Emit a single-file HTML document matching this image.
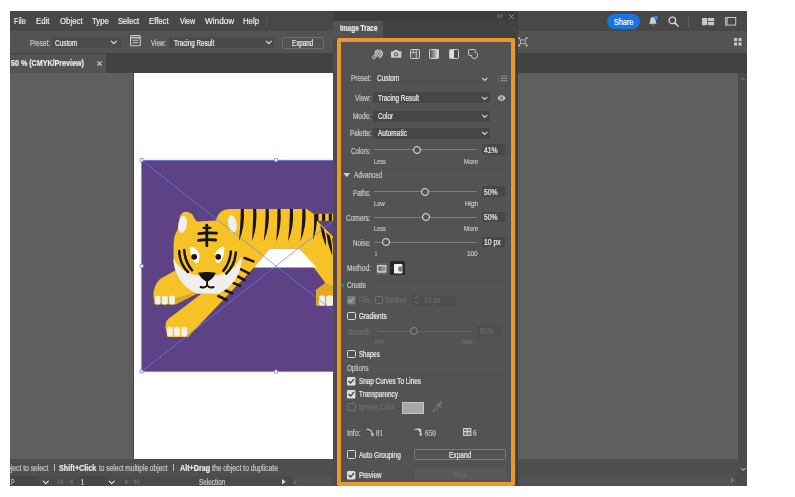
<!DOCTYPE html>
<html>
<head>
<meta charset="utf-8">
<style>
*{box-sizing:border-box;margin:0;padding:0}
html,body{width:795px;height:497px;overflow:hidden;background:#fff;font-family:"Liberation Sans",sans-serif;}
#app{position:absolute;left:10px;top:11px;width:737px;height:475px;background:#5e5e5e;overflow:hidden;}
#in{position:absolute;left:-10px;top:-11px;width:795px;height:497px;filter:blur(0.45px);will-change:transform;transform:translateZ(0)}
.a{position:absolute}
.t{position:absolute;white-space:pre;transform-origin:0 50%;-webkit-text-stroke:0.22px currentColor;}
svg{position:absolute;overflow:visible}
.dd{position:absolute;background:#474747;border-radius:1.5px}
.cb{position:absolute;width:8px;height:8px;border:1px solid #d6d6d6;border-radius:1px}
.cbd{position:absolute;width:8px;height:8px;border:1px solid #777;border-radius:1px}
.sl{position:absolute;height:1px;background:#808080}
.kn{position:absolute;width:8px;height:8px;border:1.4px solid #ececec;border-radius:50%;background:#535353}

</style>
</head>
<body>
<div id="app"><div id="in">
<!-- top bars -->
<div class="a" style="left:10px;top:11px;width:737px;height:20px;background:#484848"></div>
<div class="a" style="left:10px;top:31px;width:737px;height:22px;background:#535353"></div>
<div class="a" style="left:10px;top:53px;width:737px;height:19.5px;background:#424242"></div>
<div class="a" style="left:10px;top:53.8px;width:96px;height:18.9px;background:#535353"></div>
<!-- canvas -->
<div class="a" style="left:10px;top:72.5px;width:737px;height:386px;background:#5f5f5f"></div>
<div class="a" style="left:133.5px;top:72.5px;width:210px;height:386px;background:#fff"></div>
<!-- status + bottom -->
<div class="a" style="left:10px;top:458.5px;width:737px;height:17px;background:#4f4f4f"></div>
<div class="a" style="left:10px;top:475.5px;width:737px;height:11px;background:#4b4b4b"></div>
<!-- right scrollbar -->
<div class="a" style="left:738px;top:72.5px;width:9px;height:414px;background:#4b4b4b"></div>
<svg style="left:0;top:0" width="795" height="497" viewBox="0 0 795 497">
<defs><clipPath id="cp"><rect x="141.6" y="160.2" width="200" height="211.4"/></clipPath></defs>
<rect x="133" y="72.5" width="0.8" height="386" fill="#3c3c3c"/>
<rect x="141.6" y="160.2" width="200" height="211.4" fill="#5d4286"/>
<g clip-path="url(#cp)">
 <!-- body -->
 <path d="M215 224 Q217 210 229 209 L306.6 209 L313.6 213.8 L337 213.8 L337 220.8 L317 220.8 L337 240.6 L337 306 L316.2 305.6 L315.9 290 L325.4 283 L299.6 248.7 L269.7 248.7 L254 267.6 L189.8 335 L188.3 337 L167.4 337 L165.4 327 Q165.6 319.4 171.6 316.6 L201 294 Z" fill="#f6c226"/>
 <!-- rear paw darker -->
 <path d="M316 290 L325.4 283 L337 287 L337 306 L316.2 305.6Z" fill="#e2a828"/>
 <!-- belly white -->
 <path d="M269.7 248.7 L299.3 248.7 L316.5 267.5 L254 267.5Z" fill="#ffffff"/>
 <!-- left leg -->
 <path d="M176 270 L160 279 Q153 286 153.4 297 L154.6 304.3 L176 304.3 L200 292 Z" fill="#f6c226"/>
 <path d="M154 296.5 L176 298 L198 291.5 L176 304.3 L154.6 304.3Z" fill="#dca421"/>
 <!-- toes -->
 <g fill="#f4f0ea">
  <rect x="155" y="295.8" width="5.6" height="8.6" rx="2"/><rect x="161.8" y="295.8" width="6" height="8.6" rx="2"/><rect x="169" y="295.8" width="6" height="8.6" rx="2"/>
  <rect x="167.2" y="326.8" width="5.6" height="9.6" rx="2"/><rect x="174.1" y="326.8" width="5.8" height="9.8" rx="2"/><rect x="181.3" y="326.8" width="5.8" height="9.8" rx="2"/>
  <rect x="319" y="295.6" width="6" height="10" rx="2"/><rect x="326.2" y="295.6" width="7" height="10.2" rx="2"/>
 </g>
 <!-- body stripes -->
 <g fill="#1a1712">
  <path d="M240.8 209 L243.8 209 Q245.2 227 238.8 241.4 Q240.6 227 240.8 209Z"/>
  <path d="M253.2 209 L256.2 209 Q257.6 227 252.0 241.4 Q253.0 227 253.2 209Z"/>
  <path d="M265.7 209 L268.7 209 Q270.1 227 263.7 241.4 Q265.5 227 265.7 209Z"/>
  <path d="M277.5 209 L280.5 209 Q281.9 227 276.2 241.4 Q277.3 227 277.5 209Z"/>
  <path d="M289.9 209 L292.9 209 Q294.3 227 288.0 241.4 Q289.7 227 289.9 209Z"/>
  <path d="M302.4 209 L305.4 209 Q306.8 227 300.4 241.4 Q302.2 227 302.4 209Z"/>
  <path d="M314.2 214 L317 214 Q317.4 228 312.9 240.6 Q314.4 228 314.2 214Z"/>
  <rect x="315.8" y="213.8" width="2.6" height="7"/><rect x="322" y="213.8" width="3.2" height="7"/><rect x="328.8" y="213.8" width="3" height="7"/>
  <path d="M320.2 225.6 L323.6 228.8 Q326.6 238 325.8 246 Q321.6 236 320.2 225.6Z"/>
  <path d="M326.2 232.4 L329.6 235.6 Q332.8 246 332 255.6 Q327.6 244 326.2 232.4Z"/>
  <path d="M332.2 238 L335.4 241.4 Q337.6 252 336.4 263 Q333 250 332.2 238Z"/>
 </g>
 <g fill="none" stroke="#1a1712" stroke-width="2.6" stroke-linecap="round">
  <path d="M244.6 258 L253.4 261.4"/>
  <path d="M240.6 269.2 L249 273.4"/>
  <path d="M237 276 L244.6 280.2"/>
  <path d="M232.6 282.6 L240 285.8"/>
  <path d="M225 290.2 L232.4 293.5"/>
  <path d="M218.4 296 L226.6 300"/>
 </g>
 <!-- head -->
 <path d="M177.4 230 L180 216 Q183 210.4 188 212 L192 214 L196.5 221.4 L227 220 L240 243 L241.5 262 Q239 283 219 293.6 L197 293.6 Q177 285 173.6 262 L173.6 243 Q174 235 177.4 230Z" fill="#f6c226"/>
 <!-- white crescent -->
 <path d="M173.6 258.5 C178 268 186 273.4 197.5 275.6 L216.8 275.6 C228 273.4 236 268 241.3 257 L241.5 262 Q239 283 219 293.6 L197 293.6 Q177 285 173.6 262Z" fill="#f1efee"/>
 <!-- ears inner -->
 <ellipse cx="182.6" cy="224.4" rx="4.2" ry="8.8" fill="#f1efee" transform="rotate(10 182.6 224.4)"/>
 <ellipse cx="232.4" cy="224" rx="4.2" ry="8.8" fill="#f1efee" transform="rotate(-10 232.4 224)"/>
 <!-- eyes -->
 <path d="M190 246.6 Q197.2 248 199.5 255 Q199.8 261.8 196.4 263.6 Q189.8 259 190 246.6Z" fill="#ffffff"/>
 <path d="M224.4 246.6 Q217.2 248 214.9 255 Q214.6 261.8 218 263.6 Q224.6 259 224.4 246.6Z" fill="#ffffff"/>
 <circle cx="194.2" cy="256.8" r="2.9" fill="#17140f"/>
 <circle cx="218.2" cy="256.8" r="2.9" fill="#17140f"/>
 <!-- nose -->
 <path d="M198.2 272.8 Q207 271 215.8 272.8 Q213 279.4 207.1 282 Q201 279.4 198.2 272.8Z" fill="#17140f"/>
 <path d="M207.1 281 V285.2 M200.6 287 Q204.8 288.6 207.1 285.2 Q209.4 288.6 213.6 287" fill="none" stroke="#17140f" stroke-width="1.9" stroke-linecap="round"/>
 <!-- forehead stripes -->
 <g fill="none" stroke="#17140f" stroke-width="2.8" stroke-linecap="round">
  <path d="M206.8 225.2 V245.8"/>
  <path d="M198.8 233.6 Q207 232.2 216.4 233.2"/>
  <path d="M198.6 240.4 Q207 239 215.6 240"/>
  <path d="M203.6 227.8 H210.4" stroke-width="2.2"/>
 </g>
 <g fill="none" stroke="#17140f" stroke-width="2.5" stroke-linecap="round">
  <path d="M179.2 251 Q179.6 264 188 272"/>
  <path d="M184.2 250 Q185 262 192 270.2"/>
  <path d="M235.8 252.6 Q235 265 226.2 273.6"/>
  <path d="M230.8 251.6 Q230 262.6 223.4 270.8"/>
 </g>
</g>
<!-- selection -->
<g stroke="#5b86f5" stroke-width="0.7" fill="none">
 <rect x="141.6" y="160.2" width="268.8" height="211.4"/>
 <path d="M141.6 160.2 L410.4 371.6 M141.6 371.6 L410.4 160.2"/>
</g>
<g fill="#ffffff" stroke="#5b86f5" stroke-width="0.7">
 <rect x="140.1" y="158.7" width="3" height="3"/><rect x="274.5" y="158.7" width="3" height="3"/>
 <rect x="140.1" y="264.4" width="3" height="3"/>
 <rect x="140.1" y="370.1" width="3" height="3"/><rect x="274.5" y="370.1" width="3" height="3"/>
</g>
</svg>

<div class="a" style="left:266.3px;top:16px;width:0.8px;height:12.2px;background:#545454;"></div>
<div class="a" style="left:51.5px;top:36.6px;width:70.5px;height:11.8px;background:#4c4c4c;border-radius:1.5px"></div>
<div class="a" style="left:168.8px;top:36.6px;width:105.0px;height:11.8px;background:#4a4a4a;border-radius:1.5px"></div>
<svg style="left:110.5px;top:41.1px" width="5.6" height="2.9" viewBox="0 0 5.6 2.9"><path d="M0.3 0.2 L2.8 2.6 L5.3 0.2" fill="none" stroke="#e6e6e6" stroke-width="1.1" stroke-linecap="round" stroke-linejoin="round"/></svg>
<svg style="left:265.5px;top:41.1px" width="5.6" height="2.9" viewBox="0 0 5.6 2.9"><path d="M0.3 0.2 L2.8 2.6 L5.3 0.2" fill="none" stroke="#e6e6e6" stroke-width="1.1" stroke-linecap="round" stroke-linejoin="round"/></svg>
<svg style="left:129.6px;top:35.4px" width="10.8" height="11.4" viewBox="0 0 9.6 10"><rect x="0.5" y="0.5" width="8.6" height="9" rx="1" fill="none" stroke="#c9c9c9" stroke-width="1"/><path d="M0.5 2.4H9.1" stroke="#c9c9c9" stroke-width="1.2"/><path d="M2.2 4.6H7.4M2.2 6.8H7.4" stroke="#c9c9c9" stroke-width="0.9"/></svg>
<div class="a" style="left:281.7px;top:36.6px;width:41.9px;height:12.2px;background:transparent;border:1px solid #6e6e6e;border-radius:1.5px"></div>
<svg style="left:96.7px;top:60.9px" width="5" height="5" viewBox="0 0 4.8 4.8"><path d="M0.4 0.4L4.4 4.4M4.4 0.4L0.4 4.4" stroke="#d2d2d2" stroke-width="1.05"/></svg>
<div class="a" style="left:607.1px;top:13.5px;width:33.1px;height:15.2px;background:#1b74e4;border-radius:8px"></div>
<svg style="left:648.4px;top:15.8px" width="10.6" height="10.6" viewBox="0 0 10 10"><path d="M1 7.2C2 6.2 2 5 2.1 3.6C2.3 1.8 3.4 1 4.6 1S6.9 1.8 7.1 3.6C7.2 5 7.2 6.2 8.2 7.2Z" fill="#d3d3d3"/><path d="M3.6 8.2Q4.6 9.6 5.6 8.2Z" fill="#d3d3d3"/><circle cx="7.5" cy="1.7" r="1.9" fill="#3b8cf0"/></svg>
<svg style="left:668px;top:15.6px" width="11" height="11" viewBox="0 0 11 11"><circle cx="4.4" cy="4.4" r="3.3" fill="none" stroke="#d6d6d6" stroke-width="1.3"/><path d="M6.9 6.9L10.2 10.2" stroke="#d6d6d6" stroke-width="1.5" stroke-linecap="round"/></svg>
<div class="a" style="left:688.2px;top:16px;width:0.8px;height:11.0px;background:#5c5c5c;"></div>
<svg style="left:701.6px;top:17.9px" width="12.2" height="7.2" viewBox="0 0 12.2 7.2"><rect x="0" y="0" width="5.2" height="7.2" fill="#c8c8c8"/><rect x="6" y="0" width="6.2" height="3.2" fill="#c8c8c8"/><rect x="6" y="4" width="6.2" height="3.2" fill="#c8c8c8"/></svg>
<svg style="left:725.3px;top:17.3px" width="11.2" height="8.6" viewBox="0 0 11.2 8.6"><rect x="0.5" y="0.5" width="10.2" height="7.6" fill="none" stroke="#c8c8c8" stroke-width="1"/><rect x="0.5" y="0.5" width="2.4" height="7.6" fill="#9a9a9a"/></svg>
<svg style="left:517.8px;top:37.3px" width="9.6" height="9.6" viewBox="0 0 9.6 9.6"><rect x="2.4" y="2.9" width="4.8" height="3.8" fill="none" stroke="#bdbdbd" stroke-width="0.9"/><path d="M0.4 0.6L2 2.2M9.2 0.6L7.6 2.2M0.4 9L2 7.4M9.2 9L7.6 7.4" stroke="#cfcfcf" stroke-width="1.1"/><path d="M0.2 0.4H1.8L0.2 2Z M9.4 0.4H7.8L9.4 2Z M0.2 9.2H1.8L0.2 7.6Z M9.4 9.2H7.8L9.4 7.6Z" fill="#cfcfcf"/></svg>
<svg style="left:734.4px;top:38.2px" width="7.6" height="7.6" viewBox="0 0 7.6 7.6"><rect x="0" y="0" width="3.1" height="3.1" fill="#c9c9c9"/><rect x="4.5" y="0" width="3.1" height="3.1" fill="#c9c9c9"/><rect x="0" y="4.5" width="3.1" height="3.1" fill="#c9c9c9"/><rect x="4.5" y="4.5" width="3.1" height="3.1" fill="#c9c9c9"/></svg>
<svg style="left:740.7px;top:78.2px" width="4.2" height="2.4" viewBox="0 0 4.2 2.4"><path d="M0.3 2.2L2.1 0.3L3.9 2.2" fill="none" stroke="#8d8d8d" stroke-width="1"/></svg>
<svg style="left:740.6px;top:468.1px" width="4.6" height="2.6" viewBox="0 0 4.6 2.6"><path d="M0.3 0.2 L2.3 2.3000000000000003 L4.3 0.2" fill="none" stroke="#a5a5a5" stroke-width="1.1" stroke-linecap="round" stroke-linejoin="round"/></svg>
<div class="a" style="left:517.5px;top:476.4px;width:218.5px;height:9.6px;background:#535353;border-radius:5px"></div>
<div class="a" style="left:292.5px;top:476.4px;width:40.5px;height:9.6px;background:#535353;border-radius:3px 0 0 3px"></div>
<svg style="left:730.8px;top:478.4px" width="2.6" height="4.4" viewBox="0 0 2.6 4.4"><path d="M0.3 0.3L2.2 2.2L0.3 4.1" fill="none" stroke="#a5a5a5" stroke-width="1"/></svg>
<div class="a" style="left:10px;top:476.2px;width:29.2px;height:9.8px;background:#454545;border-radius:1px"></div>
<div class="a" style="left:79.5px;top:476.2px;width:25.3px;height:9.8px;background:#454545;border-radius:1px"></div>
<svg style="left:42.5px;top:480.8px" width="5.6" height="2.9" viewBox="0 0 5.6 2.9"><path d="M0.3 0.2 L2.8 2.6 L5.3 0.2" fill="none" stroke="#e6e6e6" stroke-width="1.1" stroke-linecap="round" stroke-linejoin="round"/></svg>
<svg style="left:108.6px;top:480.8px" width="5.6" height="2.9" viewBox="0 0 5.6 2.9"><path d="M0.3 0.2 L2.8 2.6 L5.3 0.2" fill="none" stroke="#e6e6e6" stroke-width="1.1" stroke-linecap="round" stroke-linejoin="round"/></svg>
<svg style="left:57.6px;top:479.4px" width="5.4" height="5.4" viewBox="0 0 5.4 5.4"><path d="M0.6 0V5.4" stroke="#6b6b6b" stroke-width="1"/><path d="M5.2 0L1.6 2.7L5.2 5.4Z" fill="#6b6b6b"/></svg>
<svg style="left:68.8px;top:479.4px" width="4" height="5.4" viewBox="0 0 4 5.4"><path d="M3.8 0L0.2 2.7L3.8 5.4Z" fill="#6b6b6b"/></svg>
<svg style="left:124.6px;top:479.4px" width="4" height="5.4" viewBox="0 0 4 5.4"><path d="M0.2 0L3.8 2.7L0.2 5.4Z" fill="#6b6b6b"/></svg>
<svg style="left:134px;top:479.4px" width="5.4" height="5.4" viewBox="0 0 5.4 5.4"><path d="M4.8 0V5.4" stroke="#6b6b6b" stroke-width="1"/><path d="M0.2 0L3.8 2.7L0.2 5.4Z" fill="#6b6b6b"/></svg>
<svg style="left:282.2px;top:479.2px" width="3.8" height="5.6" viewBox="0 0 3.8 5.6"><path d="M0 0L3.8 2.8L0 5.6Z" fill="#d8d8d8"/></svg>
<svg style="left:294px;top:479.6px" width="2.6" height="4.4" viewBox="0 0 2.6 4.4"><path d="M2.2 0.3L0.4 2.2L2.2 4.1" fill="none" stroke="#8a8a8a" stroke-width="0.9"/></svg>
<div class="a" style="left:53.5px;top:464.4px;width:0.9px;height:6.2px;background:#bdbdbd;"></div>
<div class="a" style="left:173.2px;top:464.4px;width:0.9px;height:6.2px;background:#bdbdbd;"></div>
<!-- panel -->
<div class="a" style="left:332.6px;top:11px;width:185.3px;height:476px;background:#3d4040"></div>
<div class="a" style="left:332.6px;top:11px;width:183.6px;height:476px;background:#535353"></div>
<div class="a" style="left:332.6px;top:37.5px;width:4.6px;height:450px;background:#4c4c4c"></div>
<div class="a" style="left:332.6px;top:11px;width:185.3px;height:9.5px;background:#3e3e3e"></div>
<div class="a" style="left:332.6px;top:20.5px;width:185.3px;height:17px;background:#424242"></div>
<div class="a" style="left:333.2px;top:21px;width:49.4px;height:17px;background:#535353"></div>
<div class="a" style="left:337px;top:38.2px;width:177.6px;height:447.9px;border:4.1px solid #e8982f;border-radius:2px"></div>
<div class="a" style="left:373.3px;top:73px;width:117.0px;height:11.3px;background:#515151;border-radius:1.5px"></div>
<div class="a" style="left:373.3px;top:92.3px;width:117.0px;height:11.0px;background:#464646;border-radius:1.5px"></div>
<div class="a" style="left:373.3px;top:110.6px;width:117.0px;height:11.2px;background:#464646;border-radius:1.5px"></div>
<div class="a" style="left:373.3px;top:127.6px;width:117.0px;height:11.3px;background:#464646;border-radius:1.5px"></div>
<svg style="left:481.6px;top:77.6px" width="5.4" height="2.7" viewBox="0 0 5.4 2.7"><path d="M0.3 0.2 L2.7 2.4000000000000004 L5.1000000000000005 0.2" fill="none" stroke="#e2e2e2" stroke-width="1.05" stroke-linecap="round" stroke-linejoin="round"/></svg>
<svg style="left:481.6px;top:96.8px" width="5.4" height="2.7" viewBox="0 0 5.4 2.7"><path d="M0.3 0.2 L2.7 2.4000000000000004 L5.1000000000000005 0.2" fill="none" stroke="#e2e2e2" stroke-width="1.05" stroke-linecap="round" stroke-linejoin="round"/></svg>
<svg style="left:481.6px;top:115.1px" width="5.4" height="2.7" viewBox="0 0 5.4 2.7"><path d="M0.3 0.2 L2.7 2.4000000000000004 L5.1000000000000005 0.2" fill="none" stroke="#e2e2e2" stroke-width="1.05" stroke-linecap="round" stroke-linejoin="round"/></svg>
<svg style="left:481.6px;top:132.2px" width="5.4" height="2.7" viewBox="0 0 5.4 2.7"><path d="M0.3 0.2 L2.7 2.4000000000000004 L5.1000000000000005 0.2" fill="none" stroke="#e2e2e2" stroke-width="1.05" stroke-linecap="round" stroke-linejoin="round"/></svg>
<svg style="left:497.5px;top:74.5px" width="10" height="8" viewBox="0 0 10 8"><path d="M0.5 0.3V7.5" stroke="#6f6f6f" stroke-width="0.9"/><path d="M2.8 1H9.4M2.8 3.3H9.4M2.8 5.6H9.4" stroke="#8c8c8c" stroke-width="1.15"/></svg>
<svg style="left:497.4px;top:94.8px" width="9.2" height="6.2" viewBox="0 0 10 7"><path d="M0.3 3.5C2 0.8 3.6 0.3 5 0.3S8 0.8 9.7 3.5C8 6.2 6.4 6.7 5 6.7S2 6.2 0.3 3.5Z" fill="#c6c6c6"/><circle cx="5" cy="3.5" r="1.9" fill="#535353"/><circle cx="5" cy="3.5" r="0.9" fill="#c6c6c6"/></svg>
<div class="a" style="left:374px;top:149.2px;width:103.2px;height:1.0px;background:#7f7f7f;"></div>
<div class="a" style="left:413.3px;top:145.7px;width:8px;height:8px;border:1.4px solid #ececec;border-radius:50%;background:#535353"></div>
<div class="a" style="left:482.2px;top:144.2px;width:22.6px;height:10.8px;background:#474747;border-radius:1.5px"></div>
<div class="a" style="left:374px;top:191.3px;width:103.2px;height:1.0px;background:#7f7f7f;"></div>
<div class="a" style="left:420.8px;top:187.8px;width:8px;height:8px;border:1.4px solid #ececec;border-radius:50%;background:#535353"></div>
<div class="a" style="left:482.2px;top:186.3px;width:22.6px;height:10.8px;background:#474747;border-radius:1.5px"></div>
<div class="a" style="left:374px;top:216.6px;width:103.2px;height:1.0px;background:#7f7f7f;"></div>
<div class="a" style="left:421.6px;top:213.1px;width:8px;height:8px;border:1.4px solid #ececec;border-radius:50%;background:#535353"></div>
<div class="a" style="left:482.2px;top:211.6px;width:22.6px;height:10.8px;background:#474747;border-radius:1.5px"></div>
<div class="a" style="left:374px;top:241.6px;width:103.2px;height:1.0px;background:#7f7f7f;"></div>
<div class="a" style="left:381.8px;top:238.1px;width:8px;height:8px;border:1.4px solid #ececec;border-radius:50%;background:#535353"></div>
<div class="a" style="left:482.2px;top:236.7px;width:22.6px;height:10.8px;background:#474747;border-radius:1.5px"></div>
<div class="a" style="left:376.5px;top:330.6px;width:95.5px;height:1.0px;background:#656565;"></div>
<div class="a" style="left:409.8px;top:327.1px;width:8px;height:8px;border:1.4px solid #8a8a8a;border-radius:50%;background:#535353"></div>
<div class="a" style="left:477px;top:325.6px;width:25.3px;height:11.0px;background:#4f4f4f;border-radius:1.5px"></div>
<div class="a" style="left:385px;top:174.6px;width:120.0px;height:0.8px;background:#575757;"></div>
<div class="a" style="left:369px;top:285px;width:136.0px;height:0.8px;background:#575757;"></div>
<div class="a" style="left:372px;top:367.8px;width:133.0px;height:0.8px;background:#575757;"></div>
<svg style="left:342.9px;top:172.9px" width="7.6" height="4.2" viewBox="0 0 6.6 4"><path d="M0 0H6.6L3.3 4Z" fill="#d2d2d2"/></svg>
<div class="a" style="left:375.6px;top:263px;width:12.4px;height:12.0px;background:#616161;border-radius:1.5px"></div>
<svg style="left:377.2px;top:264px" width="9.8" height="9.6" viewBox="0 0 10 9"><rect x="0" y="0.5" width="9.6" height="8" rx="1" fill="#c9c9c9"/><circle cx="3.6" cy="4.5" r="2.5" fill="#6a6a6a"/><circle cx="6.4" cy="4.5" r="2.5" fill="#8f8f8f"/></svg>
<div class="a" style="left:389.9px;top:261.3px;width:15.1px;height:14.1px;background:#272727;border-radius:1.5px"></div>
<svg style="left:394px;top:263.9px" width="9" height="9.4" viewBox="0 0 9 9.4"><rect x="0" y="0" width="8.4" height="9.4" rx="1" fill="#f4f4f4"/><circle cx="6.6" cy="4.9" r="2.6" fill="#7d7d7d"/></svg>
<div class="a" style="left:340.6px;top:283.5px;width:3px;height:3.2px;background:#2a7fe0;border-radius:1.2px"></div>
<svg style="left:347.2px;top:296.1px" width="8.4" height="8.4" viewBox="0 0 8 8"><rect x="0" y="0" width="8" height="8" rx="1.2" fill="#7c7c7c"/><path d="M1.8 4.1L3.4 5.8L6.3 2.2" fill="none" stroke="#a9a9a9" stroke-width="1.2" stroke-linecap="round" stroke-linejoin="round"/></svg>
<div class="a" style="left:374.5px;top:296.1px;width:8.4px;height:8.4px;border:1.15px solid #747474;border-radius:1.6px"></div>
<div class="a" style="left:347.2px;top:311.6px;width:8.4px;height:8.4px;border:1.15px solid #dadada;border-radius:1.6px"></div>
<div class="a" style="left:347.2px;top:349.8px;width:8.4px;height:8.4px;border:1.15px solid #dadada;border-radius:1.6px"></div>
<svg style="left:347.2px;top:376.9px" width="8.4" height="8.4" viewBox="0 0 8 8"><rect x="0" y="0" width="8" height="8" rx="1.2" fill="#dedede"/><path d="M1.8 4.1L3.4 5.8L6.3 2.2" fill="none" stroke="#3a3a3a" stroke-width="1.2" stroke-linecap="round" stroke-linejoin="round"/></svg>
<svg style="left:347.2px;top:390.1px" width="8.4" height="8.4" viewBox="0 0 8 8"><rect x="0" y="0" width="8" height="8" rx="1.2" fill="#dedede"/><path d="M1.8 4.1L3.4 5.8L6.3 2.2" fill="none" stroke="#3a3a3a" stroke-width="1.2" stroke-linecap="round" stroke-linejoin="round"/></svg>
<div class="a" style="left:347.2px;top:403.1px;width:8.4px;height:8.4px;border:1.15px solid #747474;border-radius:1.6px"></div>
<div class="a" style="left:347.2px;top:450.2px;width:8.4px;height:8.4px;border:1.15px solid #dadada;border-radius:1.6px"></div>
<svg style="left:347.2px;top:470.7px" width="8.4" height="8.4" viewBox="0 0 8 8"><rect x="0" y="0" width="8" height="8" rx="1.2" fill="#dedede"/><path d="M1.8 4.1L3.4 5.8L6.3 2.2" fill="none" stroke="#3a3a3a" stroke-width="1.2" stroke-linecap="round" stroke-linejoin="round"/></svg>
<div class="a" style="left:411.8px;top:294.6px;width:44.2px;height:11.8px;background:#4d4d4d;border-radius:1.5px"></div>
<svg style="left:413.8px;top:296.3px" width="5.4" height="8.4" viewBox="0 0 5.4 8.4"><path d="M0.5 3L2.7 0.6L4.9 3M0.5 5.4L2.7 7.8L4.9 5.4" fill="none" stroke="#777" stroke-width="0.9"/></svg>
<div class="a" style="left:401.7px;top:401.6px;width:22.5px;height:12.6px;background:#a8a8a8;border:1px solid #c6c6c6"></div>
<svg style="left:432px;top:401.4px" width="10.8" height="11.8" viewBox="0 0 10 11"><path d="M1 10L1.6 7.6L5.6 3.6L7 5L3 9Z" fill="none" stroke="#7a7a7a" stroke-width="0.9"/><path d="M5.2 2.6L8 5.4M6.4 3.6L8.2 1.4" stroke="#7a7a7a" stroke-width="1.6" stroke-linecap="round"/></svg>
<svg style="left:365.5px;top:428px" width="9" height="9" viewBox="0 0 9 9"><path d="M0.6 1.4C4.6 1 6.2 3.4 6.4 7.2" fill="none" stroke="#cfcfcf" stroke-width="1.1"/><path d="M4.6 5.8L6.5 8.4L8.2 5.6Z" fill="#cfcfcf"/></svg>
<svg style="left:413.5px;top:428.2px" width="9" height="9" viewBox="0 0 9 9"><path d="M0.4 1.2H6.6V5.8" fill="none" stroke="#cfcfcf" stroke-width="1.1"/><path d="M4.6 1.6H6.6V3.4Z M4.8 5.4L6.7 8.4L8.4 5.4Z" fill="#cfcfcf"/><path d="M3.4 0.6L6.9 4" stroke="#cfcfcf" stroke-width="1.6"/></svg>
<svg style="left:462.8px;top:428.4px" width="8.4" height="8" viewBox="0 0 8.4 8"><rect x="0.6" y="0.6" width="7.2" height="6.8" fill="#6a6a6a" stroke="#cfcfcf" stroke-width="1.1"/><path d="M0.6 3.6H7.8M4.2 0.6V7.4" stroke="#cfcfcf" stroke-width="1.1"/></svg>
<div class="a" style="left:414.4px;top:448.5px;width:91.9px;height:11.7px;background:transparent;border:1px solid #7b7b7b;border-radius:1.5px"></div>
<div class="a" style="left:414.4px;top:468.2px;width:91.9px;height:11.4px;background:#595959;border-radius:1.5px"></div>
<svg style="left:496.6px;top:14.4px" width="5.6" height="4" viewBox="0 0 5.6 4"><path d="M2.2 0.3L0.6 2L2.2 3.7M5 0.3L3.4 2L5 3.7" fill="none" stroke="#9d9d9d" stroke-width="0.9"/></svg>
<svg style="left:508.8px;top:13.9px" width="5" height="5" viewBox="0 0 5 5"><path d="M0.5 0.5L4.5 4.5M4.5 0.5L0.5 4.5" stroke="#9c9c9c" stroke-width="0.95"/></svg>
<svg style="left:371.6px;top:48.6px" width="11.4" height="10.4" viewBox="0 0 11.4 10.4"><path d="M3.2 1.6C5.6 -0.4 9.6 0.2 10.8 3.2C11.8 6 9.6 8.8 7.2 9.2L6.6 7.4C5.8 8 4.4 8 3.6 7.2C2.4 6 2 3.2 3.2 1.6Z" fill="#c4c4c4"/><path d="M4.6 1.8L8.8 7.6M6.4 1L10 6M3.4 3.6L6.6 8" stroke="#535353" stroke-width="0.7"/><circle cx="2" cy="8.2" r="1.5" fill="none" stroke="#c4c4c4" stroke-width="0.9"/><path d="M2 5.6V6.4M2 10V10.4M0 8.2H0.4M3.6 8.2H4.2" stroke="#c4c4c4" stroke-width="0.8"/></svg>
<svg style="left:391px;top:49.8px" width="10.4" height="7.8" viewBox="0 0 10.4 7.8"><path d="M0 1.8Q0 1.2 .6 1.2H2.8L3.6 0H6.8L7.6 1.2H9.8Q10.4 1.2 10.4 1.8V7.2Q10.4 7.8 9.8 7.8H.6Q0 7.8 0 7.2Z" fill="#cdcdcd"/><circle cx="5.2" cy="4.4" r="2.1" fill="#535353"/><circle cx="5.2" cy="4.4" r="1.1" fill="#cdcdcd"/></svg>
<svg style="left:410.2px;top:48.8px" width="10" height="10" viewBox="0 0 10 10"><rect x="0.5" y="0.5" width="9" height="9" rx="0.8" fill="#5f5f5f" stroke="#cbcbcb" stroke-width="1"/><path d="M6.3 0.5V9.5M0.5 3.7H6.3M3.4 0.5V3.7" stroke="#cbcbcb" stroke-width="0.9"/></svg>
<svg style="left:429.4px;top:48.8px" width="10" height="10" viewBox="0 0 10 10"><defs><linearGradient id="g4" x1="0" x2="1" y1="0" y2="0"><stop offset="0" stop-color="#4a4a4a"/><stop offset="1" stop-color="#e8e8e8"/></linearGradient></defs><rect x="0.5" y="0.5" width="9" height="9" rx="0.8" fill="url(#g4)" stroke="#cfcfcf" stroke-width="1"/></svg>
<svg style="left:448.8px;top:48.8px" width="10" height="10" viewBox="0 0 10 10"><rect x="0.5" y="0.5" width="9" height="9" rx="0.8" fill="#505050" stroke="#c6c6c6" stroke-width="1"/><rect x="1" y="1" width="4" height="8" fill="#dcdcdc"/></svg>
<svg style="left:467.8px;top:48.8px" width="10.4" height="10.4" viewBox="0 0 10.4 10.4"><path d="M0.6 1.2Q0.6 0.6 1.2 0.6H6.6Q7.2 0.6 7.2 1.2V3.6H8.4Q9.8 4.4 9.6 6.4Q9.4 8.6 7 9.6Q5 9.8 3.8 8.2L3.6 6.4H1.2Q0.6 6.4 0.6 5.8Z" fill="none" stroke="#cfcfcf" stroke-width="1"/></svg>

<span class="t" style='left:14.3px;top:15.6px;font-size:9.1px;line-height:10.16px;color:#e9e9e9;transform:scaleX(0.798)'>File</span>
<span class="t" style='left:35.6px;top:15.6px;font-size:9.1px;line-height:10.16px;color:#e9e9e9;transform:scaleX(0.855)'>Edit</span>
<span class="t" style='left:59.5px;top:15.6px;font-size:9.1px;line-height:10.16px;color:#e9e9e9;transform:scaleX(0.863)'>Object</span>
<span class="t" style='left:92.2px;top:15.6px;font-size:9.1px;line-height:10.16px;color:#e9e9e9;transform:scaleX(0.852)'>Type</span>
<span class="t" style='left:118.2px;top:15.6px;font-size:9.1px;line-height:10.16px;color:#e9e9e9;transform:scaleX(0.839)'>Select</span>
<span class="t" style='left:149.0px;top:15.6px;font-size:9.1px;line-height:10.16px;color:#e9e9e9;transform:scaleX(0.849)'>Effect</span>
<span class="t" style='left:179.6px;top:15.6px;font-size:9.1px;line-height:10.16px;color:#e9e9e9;transform:scaleX(0.773)'>View</span>
<span class="t" style='left:204.8px;top:15.6px;font-size:9.1px;line-height:10.16px;color:#e9e9e9;transform:scaleX(0.903)'>Window</span>
<span class="t" style='left:243.0px;top:15.6px;font-size:9.1px;line-height:10.16px;color:#e9e9e9;transform:scaleX(0.855)'>Help</span>
<span class="t" style='left:29.5px;top:38.7px;font-size:8.2px;line-height:9.16px;color:#c6c6c6;transform:scaleX(0.767)'>Preset:</span>
<span class="t" style='left:55.2px;top:38.7px;font-size:8.2px;line-height:9.16px;color:#e9e9e9;transform:scaleX(0.794)'>Custom</span>
<span class="t" style='left:151.0px;top:38.7px;font-size:8.2px;line-height:9.16px;color:#c6c6c6;transform:scaleX(0.755)'>View:</span>
<span class="t" style='left:173.6px;top:38.7px;font-size:8.2px;line-height:9.16px;color:#e9e9e9;transform:scaleX(0.766)'>Tracing Result</span>
<span class="t" style='left:292.3px;top:38.7px;font-size:8.2px;line-height:9.16px;color:#e9e9e9;transform:scaleX(0.763)'>Expand</span>
<span class="t" style='left:10.9px;top:59.0px;font-size:8.6px;line-height:9.61px;color:#e9e9e9;font-weight:700;transform:scaleX(0.829)'>50 % (CMYK/Preview)</span>
<span class="t" style='left:613.8px;top:16.7px;font-size:9.2px;line-height:10.28px;color:#ffffff;transform:scaleX(0.799)'>Share</span>
<span class="t" style='left:7.4px;top:463.5px;font-size:8.7px;line-height:9.72px;color:#c6c6c6;transform:scaleX(0.779)'>bject to select</span>
<span class="t" style='left:59.4px;top:463.5px;font-size:8.7px;line-height:9.72px;color:#e9e9e9;font-weight:700;transform:scaleX(0.824)'>Shift+Click</span>
<span class="t" style='left:99.0px;top:463.5px;font-size:8.7px;line-height:9.72px;color:#c6c6c6;transform:scaleX(0.758)'>to select multiple object</span>
<span class="t" style='left:179.6px;top:463.5px;font-size:8.7px;line-height:9.72px;color:#e9e9e9;font-weight:700;transform:scaleX(0.828)'>Alt+Drag</span>
<span class="t" style='left:211.8px;top:463.5px;font-size:8.7px;line-height:9.72px;color:#c6c6c6;transform:scaleX(0.780)'>the object to duplicate</span>
<span class="t" style='left:81.0px;top:478.2px;font-size:8.8px;line-height:9.83px;color:#e9e9e9;font-family:"Liberation Serif",serif;transform:scaleX(0.726)'>1</span>
<span class="t" style='left:198.6px;top:478.4px;font-size:8.4px;line-height:9.38px;color:#c6c6c6;transform:scaleX(0.766)'>Selection</span>
<span class="t" style='left:11.4px;top:478.4px;font-size:8.4px;line-height:9.38px;color:#b9b9b9;transform:scaleX(0.644)'>P</span>
<span class="t" style='left:339.8px;top:24.2px;font-size:8.6px;line-height:9.61px;color:#e9e9e9;font-weight:700;transform:scaleX(0.755)'>Image Trace</span>
<span class="t" style='left:350.6px;top:74.1px;font-size:8.2px;line-height:9.16px;color:#c6c6c6;transform:scaleX(0.786)'>Preset:</span>
<span class="t" style='left:376.5px;top:74.1px;font-size:8.2px;line-height:9.16px;color:#e9e9e9;transform:scaleX(0.787)'>Custom</span>
<span class="t" style='left:355.2px;top:93.8px;font-size:8.2px;line-height:9.16px;color:#c6c6c6;transform:scaleX(0.795)'>View:</span>
<span class="t" style='left:377.8px;top:93.8px;font-size:8.2px;line-height:9.16px;color:#e9e9e9;transform:scaleX(0.781)'>Tracing Result</span>
<span class="t" style='left:353.1px;top:112.1px;font-size:8.2px;line-height:9.16px;color:#c6c6c6;transform:scaleX(0.786)'>Mode:</span>
<span class="t" style='left:377.8px;top:112.1px;font-size:8.2px;line-height:9.16px;color:#e9e9e9;transform:scaleX(0.771)'>Color</span>
<span class="t" style='left:349.6px;top:129.2px;font-size:8.2px;line-height:9.16px;color:#c6c6c6;transform:scaleX(0.771)'>Palette:</span>
<span class="t" style='left:377.8px;top:129.2px;font-size:8.2px;line-height:9.16px;color:#e9e9e9;transform:scaleX(0.794)'>Automatic</span>
<span class="t" style='left:351.4px;top:146.6px;font-size:8.2px;line-height:9.16px;color:#c6c6c6;transform:scaleX(0.756)'>Colors:</span>
<span class="t" style='left:484.2px;top:145.5px;font-size:8.2px;line-height:9.16px;color:#e9e9e9;transform:scaleX(0.830)'>41%</span>
<span class="t" style='left:374.0px;top:157.5px;font-size:8px;line-height:8.94px;color:#c6c6c6;transform:scaleX(0.698)'>Less</span>
<span class="t" style='left:463.8px;top:157.5px;font-size:8px;line-height:8.94px;color:#c6c6c6;transform:scaleX(0.773)'>More</span>
<span class="t" style='left:353.9px;top:170.7px;font-size:8.2px;line-height:9.16px;color:#c6c6c6;transform:scaleX(0.774)'>Advanced</span>
<span class="t" style='left:353.4px;top:188.6px;font-size:8.2px;line-height:9.16px;color:#c6c6c6;transform:scaleX(0.758)'>Paths:</span>
<span class="t" style='left:484.2px;top:187.5px;font-size:8.2px;line-height:9.16px;color:#e9e9e9;transform:scaleX(0.830)'>50%</span>
<span class="t" style='left:374.0px;top:199.5px;font-size:8px;line-height:8.94px;color:#c6c6c6;transform:scaleX(0.735)'>Low</span>
<span class="t" style='left:464.6px;top:199.5px;font-size:8px;line-height:8.94px;color:#c6c6c6;transform:scaleX(0.796)'>High</span>
<span class="t" style='left:346.4px;top:213.9px;font-size:8.2px;line-height:9.16px;color:#c6c6c6;transform:scaleX(0.783)'>Corners:</span>
<span class="t" style='left:484.2px;top:212.8px;font-size:8.2px;line-height:9.16px;color:#e9e9e9;transform:scaleX(0.830)'>50%</span>
<span class="t" style='left:374.0px;top:224.9px;font-size:8px;line-height:8.94px;color:#c6c6c6;transform:scaleX(0.698)'>Less</span>
<span class="t" style='left:463.8px;top:224.9px;font-size:8px;line-height:8.94px;color:#c6c6c6;transform:scaleX(0.773)'>More</span>
<span class="t" style='left:353.4px;top:238.8px;font-size:8.2px;line-height:9.16px;color:#c6c6c6;transform:scaleX(0.758)'>Noise:</span>
<span class="t" style='left:484.2px;top:237.9px;font-size:8.2px;line-height:9.16px;color:#e9e9e9;transform:scaleX(0.839)'>10 px</span>
<span class="t" style='left:374.5px;top:249.9px;font-size:8px;line-height:8.94px;color:#c6c6c6;transform:scaleX(0.449)'>1</span>
<span class="t" style='left:467.1px;top:249.9px;font-size:8px;line-height:8.94px;color:#c6c6c6;transform:scaleX(0.793)'>100</span>
<span class="t" style='left:347.1px;top:264.4px;font-size:8.2px;line-height:9.16px;color:#c6c6c6;transform:scaleX(0.808)'>Method:</span>
<span class="t" style='left:347.1px;top:281.2px;font-size:8.2px;line-height:9.16px;color:#c6c6c6;transform:scaleX(0.769)'>Create</span>
<span class="t" style='left:359.0px;top:296.3px;font-size:8.2px;line-height:9.16px;color:#6e6e6e;transform:scaleX(0.721)'>Fills</span>
<span class="t" style='left:385.3px;top:296.3px;font-size:8.2px;line-height:9.16px;color:#6e6e6e;transform:scaleX(0.771)'>Strokes</span>
<span class="t" style='left:424.3px;top:296.3px;font-size:8.2px;line-height:9.16px;color:#6e6e6e;transform:scaleX(0.819)'>10 px</span>
<span class="t" style='left:359.0px;top:311.7px;font-size:8.2px;line-height:9.16px;color:#e9e9e9;transform:scaleX(0.777)'>Gradients</span>
<span class="t" style='left:347.6px;top:327.7px;font-size:8.2px;line-height:9.16px;color:#6e6e6e;transform:scaleX(0.784)'>Smooth:</span>
<span class="t" style='left:480.2px;top:327.0px;font-size:8.2px;line-height:9.16px;color:#6e6e6e;transform:scaleX(0.811)'>82%</span>
<span class="t" style='left:374.8px;top:338.0px;font-size:8px;line-height:8.94px;color:#6e6e6e;transform:scaleX(0.683)'>Min</span>
<span class="t" style='left:462.0px;top:338.0px;font-size:8px;line-height:8.94px;color:#6e6e6e;transform:scaleX(0.721)'>Max</span>
<span class="t" style='left:359.0px;top:349.9px;font-size:8.2px;line-height:9.16px;color:#e9e9e9;transform:scaleX(0.749)'>Shapes</span>
<span class="t" style='left:347.4px;top:363.9px;font-size:8.2px;line-height:9.16px;color:#c6c6c6;transform:scaleX(0.762)'>Options</span>
<span class="t" style='left:359.0px;top:377.0px;font-size:8.2px;line-height:9.16px;color:#e9e9e9;transform:scaleX(0.775)'>Snap Curves To Lines</span>
<span class="t" style='left:359.0px;top:390.2px;font-size:8.2px;line-height:9.16px;color:#e9e9e9;transform:scaleX(0.782)'>Transparency</span>
<span class="t" style='left:359.0px;top:403.2px;font-size:8.2px;line-height:9.16px;color:#6e6e6e;transform:scaleX(0.794)'>Ignore Color</span>
<span class="t" style='left:347.4px;top:428.5px;font-size:8.2px;line-height:9.16px;color:#c6c6c6;transform:scaleX(0.853)'>Info:</span>
<span class="t" style='left:376.4px;top:428.6px;font-size:8.8px;line-height:9.83px;color:#c6c6c6;font-family:"Liberation Serif",serif;transform:scaleX(0.796)'>81</span>
<span class="t" style='left:424.6px;top:428.6px;font-size:8.8px;line-height:9.83px;color:#c6c6c6;font-family:"Liberation Serif",serif;transform:scaleX(0.833)'>650</span>
<span class="t" style='left:472.9px;top:428.6px;font-size:8.8px;line-height:9.83px;color:#c6c6c6;font-family:"Liberation Serif",serif;transform:scaleX(0.817)'>6</span>
<span class="t" style='left:359.0px;top:450.6px;font-size:8.2px;line-height:9.16px;color:#e9e9e9;transform:scaleX(0.791)'>Auto Grouping</span>
<span class="t" style='left:448.8px;top:450.9px;font-size:8.2px;line-height:9.16px;color:#e9e9e9;transform:scaleX(0.799)'>Expand</span>
<span class="t" style='left:359.0px;top:470.8px;font-size:8.2px;line-height:9.16px;color:#e9e9e9;transform:scaleX(0.773)'>Preview</span>
<span class="t" style='left:453.2px;top:471.2px;font-size:8.2px;line-height:9.16px;color:#6c6c6c;transform:scaleX(0.688)'>Trace</span>
</div></div>
</body>
</html>
